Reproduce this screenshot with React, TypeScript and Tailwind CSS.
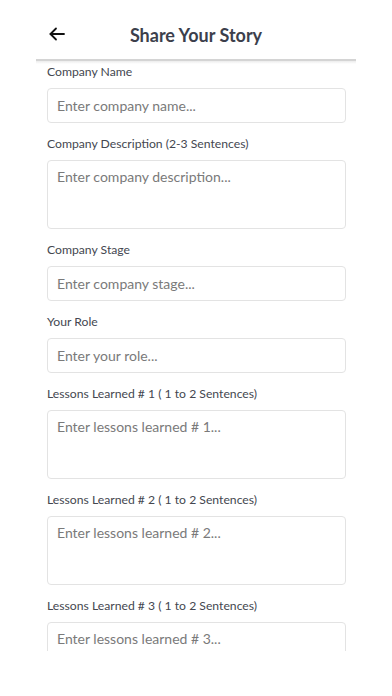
import React, { useState } from 'react';

interface Field {
    label: string;
    placeholder: string;
    multiline?: boolean;
}

const fields: Field[] = [
    { label: 'Company Name', placeholder: 'Enter company name...' },
    { label: 'Company Description (2-3 Sentences)', placeholder: 'Enter company description...', multiline: true },
    { label: 'Company Stage', placeholder: 'Enter company stage...' },
    { label: 'Your Role', placeholder: 'Enter your role...' },
    { label: 'Lessons Learned # 1 ( 1 to 2 Sentences)', placeholder: 'Enter lessons learned # 1...', multiline: true },
    { label: 'Lessons Learned # 2 ( 1 to 2 Sentences)', placeholder: 'Enter lessons learned # 2...', multiline: true },
    { label: 'Lessons Learned # 3 ( 1 to 2 Sentences)', placeholder: 'Enter lessons learned # 3...', multiline: true },
];

export default function App() {
    const [values, setValues] = useState<Record<number, string>>({});

    return (
        <div className="w-[392px] h-[696px] bg-white flex flex-col" style={{ fontFamily: 'Lato, "Open Sans", sans-serif' }}>
            {/* Header */}
            <div className="h-[59px] shrink-0 relative flex items-center justify-center pt-[11px]">
                <button className="absolute left-[49px] top-[27px] text-[#111]">
                    <svg width="16" height="14" viewBox="0 0 16 14" fill="none" stroke="currentColor" strokeWidth="1.8" strokeLinecap="round" strokeLinejoin="round">
                        <path d="M15 7H1.5" />
                        <path d="M7 1.5L1.5 7L7 12.5" />
                    </svg>
                </button>
                <h1 className="text-[18px] font-bold text-[#3c3f4c]">Share Your Story</h1>
            </div>
            <div className="mx-[36px] h-[2px] shrink-0 bg-[#d4d4d4]" />
            <div className="mx-[36px] h-[3px] shrink-0 bg-gradient-to-b from-[#ececec] to-white -mb-[3px]" />

            {/* Form */}
            <div className="h-[590px] overflow-hidden pl-[47px] pr-[46px] pt-[3px]">
                <div className="flex flex-col gap-[13px]">
                    {fields.map((f, i) => (
                        <div key={i} className="flex flex-col gap-[8px]">
                            <label className="text-[12.2px] leading-[16px] text-[#444750]">{f.label}</label>
                            {f.multiline ? (
                                <textarea
                                    value={values[i] ?? ''}
                                    onChange={e => setValues(v => ({ ...v, [i]: e.target.value }))}
                                    placeholder={f.placeholder}
                                    className="h-[69px] w-full resize-none rounded-[4px] border border-[#e3e3e3] px-[9px] py-[6px] text-[14px] leading-[19px] text-[#333] placeholder:text-[#7a7a7a] outline-none"
                                />
                            ) : (
                                <input
                                    value={values[i] ?? ''}
                                    onChange={e => setValues(v => ({ ...v, [i]: e.target.value }))}
                                    placeholder={f.placeholder}
                                    className="h-[35px] w-full rounded-[4px] border border-[#e3e3e3] px-[9px] text-[14px] text-[#333] placeholder:text-[#7a7a7a] outline-none"
                                />
                            )}
                        </div>
                    ))}
                </div>
            </div>
        </div>
    );
}
